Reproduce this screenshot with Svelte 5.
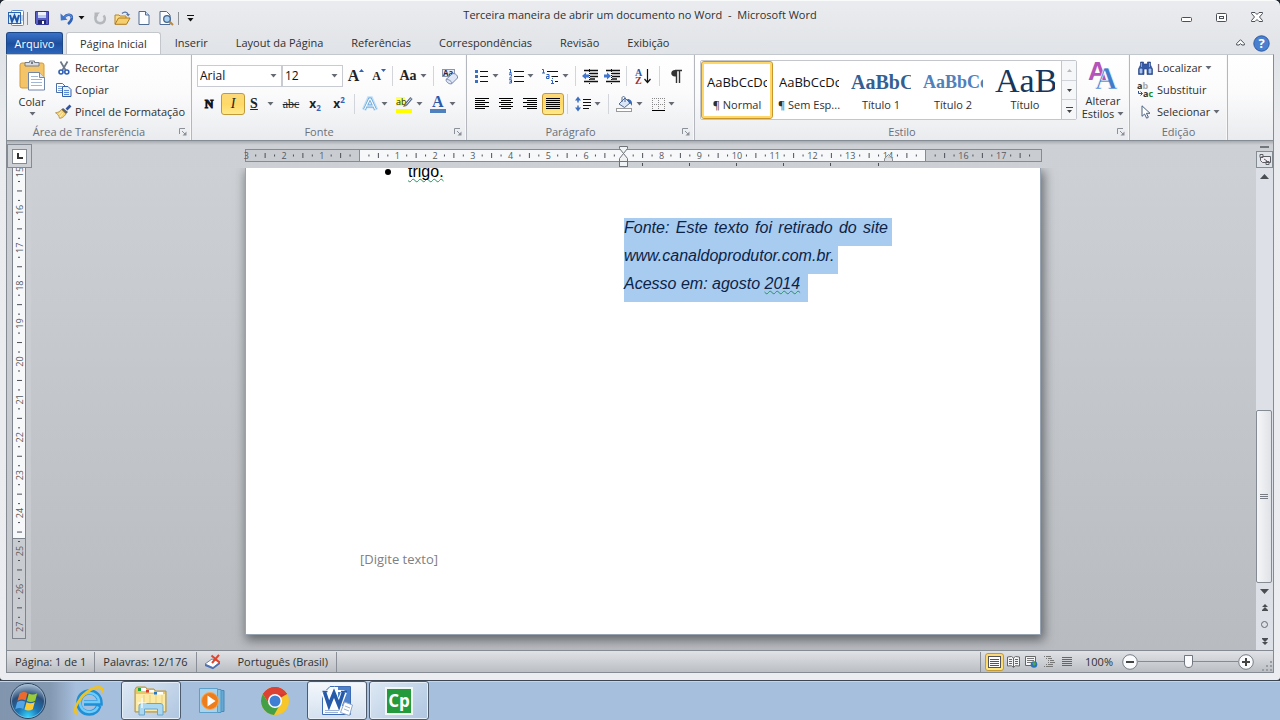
<script>
  const tabs = ['Inserir', 'Layout da Página', 'Referências', 'Correspondências', 'Revisão', 'Exibição'];
  const styles = [
    { sample: 'AaBbCcDc', name: '¶ Normal', kind: 'body' },
    { sample: 'AaBbCcDc', name: '¶ Sem Esp...', kind: 'body' },
    { sample: 'AaBbCc', name: 'Título 1', kind: 'h1' },
    { sample: 'AaBbCc', name: 'Título 2', kind: 'h2' },
    { sample: 'AaB', name: 'Título', kind: 'title' }
  ];
  const views = ['print', 'read', 'web', 'outline', 'draft'];

  const hStep = 37.75;
  const hZero = 114.5;
  const hNumbers = [];
  const hTicks = [];
  for (let q = -12; q <= 72; q++) {
    const x = hZero + (q * hStep) / 4;
    if (x > 792) break;
    if (q % 4 === 0) {
      if (q !== 0 && q !== 60 && q !== 28) hNumbers.push({ x, n: Math.abs(q / 4) });
    } else if (Math.abs(x - 680) > 4) hTicks.push({ x, half: q % 2 === 0 });
  }

  const vStep = 37.9;
  const vNumbers = [];
  const vTicks = [];
  for (let q = 60; q <= 108; q++) {
    const y = 4 + ((q - 60) * vStep) / 4;
    if (q % 4 === 0) vNumbers.push({ y, n: q / 4 });
    else vTicks.push({ y, half: q % 2 === 0 });
  }
  const tabStops = [397, 444, 491, 538, 585, 633];
  let zoom = $state(50);
</script>

{#snippet caret()}
  <svg class="caret" width="7" height="4" viewBox="0 0 7 4" aria-hidden="true"><path d="M.5 0h6L3.5 3.5z" fill="#666b73" /></svg>
{/snippet}

{#snippet launcher()}
  <button class="launcher" aria-label="Opções"><svg width="8" height="8" viewBox="0 0 8 8"><path d="M.5 6V.5H6M3 3l3 3" fill="none" stroke="#8c9199" /><path d="M7.500 3.500v4h-4z" fill="#8c9199" /></svg></button>
{/snippet}

{#snippet lines(ws, anchor)}
  <svg width="14" height="12" viewBox="0 0 14 12" aria-hidden="true">
    {#each ws as w, i}
      <rect x={anchor === 'end' ? 14 - w : anchor === 'mid' ? (14 - w) / 2 : 0} y={i * 2} width={w} height="1" fill="#000" />
    {/each}
  </svg>
{/snippet}

{#snippet icon(name)}
  {#if name === 'word'}
    <svg width="16" height="16" viewBox="0 0 16 16"><rect x="3.500" y=".5" width="12" height="15" rx="1" fill="#fff" stroke="#5f8cc7" /><path d="M13 6h2M13 8h2M13 10h2M5 13h9" stroke="#7aa0d4" /><rect x=".5" y="2.500" width="12" height="11" fill="#dceafa" stroke="#2a63ae" /><path d="M2 5l2 6.500L6.500 5.500 9 11.500 11 5" fill="none" stroke="#1f57a8" stroke-width="2" /></svg>
  {:else if name === 'save'}
    <svg width="14" height="14" viewBox="0 0 14 14"><path d="M.5.5h13v13h-12l-1-1z" fill="#5a5fc6" stroke="#33379c" /><rect x="3" y="1" width="8" height="6" fill="#eef3fc" /><path d="M3 4h8v3H3z" fill="#b9cdf0" /><rect x="3" y="9" width="8" height="4" fill="#23286f" /><rect x="7" y="10" width="2" height="3" fill="#fff" /></svg>
  {:else if name === 'undo'}
    <svg width="14" height="13" viewBox="0 0 14 13"><path d="M4 5.500C7 1.500 12 2 11.800 6c-.1 3-2 4.500-3.800 6" fill="none" stroke="#2f62b8" stroke-width="2.600" /><path d="M4 5.500C7 1.500 12 2 11.800 6" fill="none" stroke="#6f9de2" stroke-width="1" /><path d="M.5 1.500l.3 7 6.700-.8z" fill="#3f74cb" /></svg>
  {:else if name === 'redo'}
    <svg width="13" height="13" viewBox="0 0 13 13"><path d="M3.500 2.500C0 5 1 11.200 6 11.200S12 6 9.500 3.500" fill="none" stroke="#b4b7bb" stroke-width="2.400" /><path d="M6 .5h-5.500v5.500z" fill="#b4b7bb" /></svg>
  {:else if name === 'open'}
    <svg width="17" height="14" viewBox="0 0 17 14"><path d="M1 13V4h4l1 1h6v3" fill="#f8dd8c" stroke="#b98624" /><path d="M1 13.300L4.500 7H16l-3.500 6.300z" fill="#f5cf6d" stroke="#b07a1d" /><path d="M8 2.500C10 .5 13 .8 14 3" fill="none" stroke="#5775a5" stroke-width="1.300" /><path d="M12 3h4l-1.800 2.500z" fill="#5775a5" /></svg>
  {:else if name === 'new'}
    <svg width="12" height="14" viewBox="0 0 12 14"><path d="M1 .5h6.500L11 4v9.500H1z" fill="#fbfdff" stroke="#4f6a93" /><path d="M7.500.5V4H11" fill="#cfe0f5" stroke="#4f6a93" /></svg>
  {:else if name === 'preview'}
    <svg width="15" height="15" viewBox="0 0 15 15"><path d="M1 .5h6.500L11 4v9.500H1z" fill="#fbfdff" stroke="#4f6a93" /><circle cx="8" cy="8" r="3.300" fill="#a9d2f2" stroke="#46648c" stroke-width="1.300" /><path d="M10.500 10.500l3.500 3.500" stroke="#b88a3a" stroke-width="2" /></svg>
  {:else if name === 'paste'}
    <svg width="27" height="31" viewBox="0 0 27 31"><rect x="1" y="3" width="24" height="25" rx="2" fill="#f3c468" stroke="#d69a35" /><path d="M6 6V2.500h4.500V1h5v1.500H20V6z" fill="#d8dce2" stroke="#747d8a" /><circle cx="13" cy="3" r="1" fill="#555c68" /><path d="M9.500 12.500h11l5 5v12.500h-16z" fill="#fff" stroke="#6f86a8" /><path d="M20.500 12.500v5h5" fill="#dbe6f4" stroke="#6f86a8" /><path d="M12 16.500h7M12 19.500h11M12 22.500h11M12 25.500h11" stroke="#a3b6d3" /></svg>
  {:else if name === 'cut'}
    <svg width="12" height="14" viewBox="0 0 12 14"><path d="M2.500.5l5 8.500M9.500.5l-5 8.500" stroke="#6b7686" stroke-width="1.700" /><circle cx="3" cy="11" r="2" fill="none" stroke="#2f5fb5" stroke-width="1.600" /><circle cx="8.800" cy="11" r="2" fill="none" stroke="#2f5fb5" stroke-width="1.600" /></svg>
  {:else if name === 'copy'}
    <svg width="16" height="14" viewBox="0 0 16 14"><path d="M.5.500h6l2.500 2.500v6.500H.5z" fill="#fff" stroke="#4b6ea8" /><path d="M2 3.500h4M2 5.500h4M2 7.500h4" stroke="#7fa3dc" /><path d="M6.500 3.500h5.500l3 3v7H6.500z" fill="#eaf2fd" stroke="#3560a8" /><path d="M8 7.500h5M8 9.500h5M8 11.500h5" stroke="#5d8cd6" /></svg>
  {:else if name === 'brush'}
    <svg width="17" height="14" viewBox="0 0 17 14"><path d="M15.500.5l-4 4" stroke="#35549a" stroke-width="2.600" /><path d="M8 3l5 4-2 2-5-4z" fill="#5b6472" /><path d="M6.500 4.500l4.500 4.500C9 12 6.500 13.500 4.500 13.300 4 11 2.500 8.500.5 7.800 3 7.500 5 6.500 6.500 4.500z" fill="#f4d070" stroke="#a88132" stroke-width=".7" /><path d="M5 12l3-4M3.500 9.500l3-2.500" stroke="#fff3c4" /></svg>
  {:else if name === 'eraser'}
    <svg width="17" height="17" viewBox="0 0 17 17"><rect x=".5" y="1.500" width="12" height="7" fill="#e6edf8" stroke="#8c97ab" /><text x="1" y="8" font-size="8" font-weight="700" fill="#1d2b52" font-family="Open Sans">Aa</text><path d="M4 11.500l6-5.500c2.500-1.500 6 1 5.500 4l-5.500 5.500c-2 1.300-6-1-6-4z" fill="#dfe6f5" stroke="#7787ab" /><path d="M4 11.500c1-1 6 1.500 6 4" fill="none" stroke="#7787ab" /></svg>
  {:else if name === 'glow'}
    <svg width="16" height="16" viewBox="0 0 16 16"><path d="M2 14L7 2.500h2L14 14M4.500 10h7" fill="none" stroke="#bfe0f7" stroke-width="4.500" /><path d="M2.500 13.500L7.500 3h1L13.500 13.500M5 10h6.500" fill="none" stroke="#6aa5da" stroke-width="2.800" /><path d="M2.500 13.500L7.500 3h1L13.500 13.500M5 10h6.500" fill="none" stroke="#fff" stroke-width="1.200" /></svg>
  {:else if name === 'marker'}
    <svg width="17" height="17" viewBox="0 0 17 17"><rect x="0" y="1" width="9" height="9" fill="#ffff5a" /><text x="0" y="9" font-size="9" fill="#222" font-family="Open Sans">ab</text><path d="M15.500 2l-6 7" stroke="#5d6d86" stroke-width="3" /><path d="M15 2.500l-5 6" stroke="#dfe7f2" /><path d="M7 11l1.500-3 2 2z" fill="#8a6d2a" /><rect x="0" y="13" width="16" height="4" fill="#ffff00" /></svg>
  {:else if name === 'color'}
    <svg width="16" height="17" viewBox="0 0 16 17"><text x="2" y="11" font-size="16" font-weight="700" fill="#2c5aa8" font-family="Liberation Serif">A</text><rect x="0" y="13" width="16" height="4" fill="#4f81bd" /></svg>
  {:else if name === 'bullets'}
    <svg width="14" height="14" viewBox="0 0 14 14"><path d="M0 1h3v3H0zM0 6h3v3H0zM0 11h3v3H0z" fill="#3d6fc0" /><path d="M5 2.500h8M5 7.500h8M5 12.500h8" stroke="#111" /></svg>
  {:else if name === 'numbers'}
    <svg width="15" height="15" viewBox="0 0 15 15"><path d="M0 .5h1.500V4M0 4h3M0 5.700h2.500v1.500L.5 9H3M0 10.700h2.500V14H0M.7 12.300h2" fill="none" stroke="#2f62b8" /><path d="M5 2.500h10M5 7.500h10M5 12.500h10" stroke="#111" /></svg>
  {:else if name === 'multi'}
    <svg width="17" height="15" viewBox="0 0 17 15"><path d="M0 .5h1.500V4M0 4h3M4.500 5.500h2.500V9.500H4.500V7.500H7M9 11.500h1.500V14.500M9 14.500h3M10.500 9v1" fill="none" stroke="#2f62b8" /><path d="M5 2.500h11M9.500 7.500H16M13 12.500h3" stroke="#111" /></svg>
  {:else if name === 'outdent' || name === 'indent'}
    <svg width="17" height="15" viewBox="0 0 17 15"><path d="M2 1.500h14M8 4.500h8M8 7.500h8M8 10h5M2 12.500h14" stroke="#111" stroke-width="1.300" /><path d="M7.500 0v15" stroke="#111" stroke-dasharray="1 1" /><path d={name === 'outdent' ? 'M0 7l4-3.500v2h3v3H4v2z' : 'M7 7L3 3.500v2H0v3h3v2z'} fill="#3f76cf" /></svg>
  {:else if name === 'sort'}
    <svg width="16" height="17" viewBox="0 0 16 17"><g font-size="10" font-weight="700" font-family="Liberation Serif"><text x="0" y="8" fill="#2c5aa8">A</text><text x="0" y="16" fill="#9a2f35">Z</text></g><path d="M12.500 1v13M9.500 11l3 3.500 3-3.500" fill="none" stroke="#111" stroke-width="1.200" /></svg>
  {:else if name === 'pilcrow'}
    <svg width="11" height="13" viewBox="0 0 11 13"><path d="M6 0H4C-1 0-1 6.500 4 6.500h1z" fill="#333" /><path d="M4 .500h7M5.500 0v13M8.500 0v13" stroke="#333" stroke-width="1.400" fill="none" /></svg>
  {:else if name === 'spacing'}
    <svg width="16" height="16" viewBox="0 0 16 16"><path d="M3 2v12" stroke="#3d6fc0" stroke-width="1.500" stroke-dasharray="4.500 3" /><path d="M0 4.500L3 .500l3 4zM0 11.500L3 15.500l3-4z" fill="#3d6fc0" /><path d="M8 3.500h8M8 6.500h8M8 9.500h8M8 12.500h6" stroke="#111" /></svg>
  {:else if name === 'bucket'}
    <svg width="17" height="16" viewBox="0 0 17 16"><path d="M3 8l6-6 5 5-5.500 4.500z" fill="#dbe7f7" stroke="#50688f" /><path d="M6 6V2c0-2 3-2 3 0v4" fill="none" stroke="#50688f" /><path d="M11 3c4 0 5.500 2 5 7-1-2-2-3-3-3z" fill="#3568b5" /><rect x=".5" y="12.500" width="15" height="3" fill="#fff" stroke="#9a9a9a" /></svg>
  {:else if name === 'border'}
    <svg width="13" height="13" viewBox="0 0 13 13"><path d="M.5 0v12M6.500 0v12M12.500 0v12M0 .5h13M0 6.500h13" stroke="#888" stroke-dasharray="1 1" /><path d="M0 12.500h13" stroke="#000" /></svg>
  {:else if name === 'change'}
    <svg width="31" height="30" viewBox="0 0 31 30"><text x="0" y="19" font-size="26" font-weight="700" fill="#b453b8" font-family="Liberation Sans">A</text><text x="7" y="28" font-size="31" font-weight="700" fill="#3f7cca" stroke="#fff" stroke-width=".6" font-family="Liberation Serif">A</text></svg>
  {:else if name === 'find'}
    <svg width="15" height="14" viewBox="0 0 15 14"><path d="M2.500 1h3v2h4V1h3v3l2 4v5.500H9V8H6v5.500H.5V8l2-4z" fill="#3559a4" stroke="#1f3a78" stroke-width=".6" /><path d="M2 8h2v4H2zM11 8h2v4h-2zM3.500 2v4M11.500 2v4" fill="#a9c4ee" stroke="#a9c4ee" stroke-width=".7" /></svg>
  {:else if name === 'replace'}
    <svg width="17" height="16" viewBox="0 0 17 16"><g font-size="9" font-weight="700" font-family="Open Sans"><text x="0" y="7"><tspan fill="#333">a</tspan><tspan fill="#aaa">b</tspan></text><text x="6" y="15"><tspan fill="#333">a</tspan><tspan fill="#178a1c">c</tspan></text></g><path d="M1.500 9v2.500H5M3.500 9.500l2 2-2 2" fill="none" stroke="#2d4f94" /></svg>
  {:else if name === 'pointer'}
    <svg width="10" height="14" viewBox="0 0 10 14"><path d="M1 .8v10.500l2.600-2.300 2 4.200 1.800-.9-2-4H9z" fill="#fff" stroke="#4b6080" /></svg>
  {:else if name === 'proof'}
    <svg width="18" height="16" viewBox="0 0 18 16"><path d="M1 10l7-5 8 3-7 5.500z" fill="#fff" stroke="#7185a8" /><path d="M1 10l8 3.500v1.800L1 12zM9 13.500L16 8v2l-7 5.300z" fill="#4a6fb5" /><path d="M7.500 1.500l8 7M15 .8L8 9" stroke="#e0452b" stroke-width="2" /></svg>
  {:else if name === 'print'}
    <svg width="13" height="12" viewBox="0 0 13 12"><rect x=".5" y=".5" width="12" height="11" fill="#fff" stroke="#555" /><path d="M2 3.500h9M2 5.500h9M2 7.500h9M2 9.500h9" stroke="#555" /></svg>
  {:else if name === 'read'}
    <svg width="13" height="12" viewBox="0 0 13 12"><path d="M.5 1l4-.500 2 1.500 2-1.500 4 .500v9l-4-.300-2 1.800-2-1.800-4 .300z" fill="#f4f5f6" stroke="#666" /><path d="M6.500 2v9M2 3.500h3M2 5.500h3M2 7.500h3M8 3.500h3M8 5.500h3M8 7.500h3" stroke="#666" /></svg>
  {:else if name === 'web'}
    <svg width="13" height="12" viewBox="0 0 13 12"><path d="M.5.500h10v9H.5z" fill="#f4f5f6" stroke="#666" /><path d="M2 2.500h7M2 4.500h7M2 6.500h5" stroke="#777" /><circle cx="9" cy="8.500" r="3.300" fill="#2a72b8" /><path d="M7 7l3-1 1 2-2 2z" fill="#54a846" /></svg>
  {:else if name === 'outline'}
    <svg width="11" height="11" viewBox="0 0 11 11"><path d="M0 .5h1M2 .5h5M2 2.500h1M4 2.500h4M4 4.500h1M6 4.500h4M4 6.500h1M6 6.500h5M2 8.500h1M4 8.500h5M0 10.500h1M2 10.500h7" stroke="#777" /></svg>
  {:else if name === 'draft'}
    <svg width="10" height="9" viewBox="0 0 10 9"><path d="M0 .5h10M0 2.500h10M0 4.500h10M0 6.500h10M0 8.500h10" stroke="#666" /></svg>
  {:else if name === 'start'}
    <svg width="38" height="38" viewBox="0 0 38 38"><defs><radialGradient id="orb" cx=".5" cy=".95" r=".9"><stop offset="0" stop-color="#35d5ff" /><stop offset=".35" stop-color="#1c76b4" /><stop offset=".7" stop-color="#2a4d78" /><stop offset="1" stop-color="#9eb6cc" /></radialGradient></defs><circle cx="19" cy="19" r="17.500" fill="url(#orb)" stroke="#31435c" /><circle cx="19" cy="19" r="16.500" fill="none" stroke="#a6c3dc" stroke-opacity=".6" /><path d="M10.500 11.500c3-2 5.500-2 8-.5l-2 7.500c-2.500-1.500-5-1.300-8 .3z" fill="#ee6a2c" /><path d="M19.700 11.500c3 1.500 5.500 1.300 8.500-.3l-2 7.500c-3 1.700-5.700 1.500-8.300.3z" fill="#9acb3b" /><path d="M8.200 20c3-1.700 5.300-1.600 8-.3l-2 7.300c-2.600-1.300-5-1.200-8 .3z" fill="#53a5e8" /><path d="M17.500 20.300c3 1.400 5.500 1.200 8.300-.3l-2 7.300c-3 1.600-5.600 1.500-8.300.3z" fill="#fccb34" /></svg>
  {:else if name === 'ie'}
    <svg width="32" height="32" viewBox="0 0 32 32"><path d="M26 20.500C24 26 20 28 16.500 28 10 28 6 23.500 6 17.500S10.500 7 16.500 7 27 11.500 27 18H11" fill="none" stroke="#1f8fd8" stroke-width="5.500" /><path d="M25 21.500C23 26 20 27 16.500 27 11 27 7 23 7 17.500S11 8 16.500 8 26 12 26 17H11" fill="none" stroke="#6fcbf7" stroke-width="2.500" /><path d="M4 29c-6-4 4-19 14-24.500 6-3.300 12-3.500 11.500 3" fill="none" stroke="#f3c21c" stroke-width="2.600" /></svg>
  {:else if name === 'explorer'}
    <svg width="34" height="32" viewBox="0 0 34 32"><path d="M1 4.500l1.500-2.500h9L13 4h7l1.500 2H32v21H1z" fill="#e9c766" stroke="#b8933a" /><path d="M2 9h29v17H2z" fill="#fbe9a4" /><path d="M4 3h3v3H4z" fill="#1ba33a" /><path d="M7 3h5v3H7z" fill="#fff" /><path d="M12 5h3v2.500h-3z" fill="#d63c32" /><path d="M15 5h5v2.500h-5z" fill="#fff" /><path d="M20 7h3v2.500h-3z" fill="#2378cb" /><path d="M23 7h6v2.500h-6z" fill="#fff" /><path d="M10 10v9M16 10v9M22 10v9M28 10v15" stroke="#e8cf7d" /><path d="M5 30V21.500c0-2 1-3 3-3h18c2 0 3 1 3 3V30h-5.500v-6h-13v6z" fill="#a9d8f0" stroke="#6ca5c8" /><path d="M8 13v10M3.500 18h9" stroke="#fff" stroke-width="1.200" /></svg>
  {:else if name === 'media'}
    <svg width="30" height="28" viewBox="0 0 30 28"><path d="M14 3.500h12v21H14z" fill="#63a9d3" stroke="#478ab8" /><path d="M8 2.500h15v23H8z" fill="#84c0e2" stroke="#5395c0" /><path d="M1.500 1.500h18v24h-18z" fill="#a9d3ec" stroke="#5c9fc9" /><circle cx="12" cy="14" r="8.500" fill="#ee7d1c" stroke="#f9a650" /><path d="M9.500 8.500l8 5.500-8 5.500z" fill="#fff" /></svg>
  {:else if name === 'chrome'}
    <svg width="30" height="30" viewBox="0 0 30 30"><circle cx="15" cy="15" r="14" fill="#f6c62a" /><path d="M15 15L2.900 8A14 14 0 0 1 27.100 8z" fill="#d7392c" /><path d="M15 8h12.100A14 14 0 0 0 2.900 8L9 18z" fill="#dc4234" /><path d="M2.900 8A14 14 0 0 0 14 29l6-10.500L15 21l-6-3z" fill="#44a047" /><circle cx="15" cy="15" r="7" fill="#fff" /><circle cx="15" cy="15" r="5.500" fill="#3e7fd4" /></svg>
  {:else if name === 'wordbig'}
    <svg width="32" height="32" viewBox="0 0 32 32"><path d="M9 1.500h20.500v28H1.500V9z" fill="#f7faff" stroke="#3d6cb4" /><path d="M17 2h12v19H17z" fill="#4b82cb" /><path d="M3 7l4.500 14L13 9l4.500 12L23 7" fill="none" stroke="#fff" stroke-width="6" /><path d="M2.500 6h21" stroke="#fff" stroke-width="2" /><path d="M3.500 7l4.500 13.500L13 8l5 12.500L22.500 7" fill="none" stroke="#245aa9" stroke-width="3.600" /><path d="M1.500 6.500h5M20 6.500h6" stroke="#245aa9" stroke-width="1.500" /><path d="M23.500 17l8 3-3 10.500-9-3z" fill="#fff" stroke="#8fa9cf" /><path d="M24 21l5 2M23 24l5 2M4 25.500h14M4 27.500h13" stroke="#9cb3d5" /></svg>
  {/if}
{/snippet}

<div class="screen">
  <div class="window">
    <header class="titlebar">
      <div class="quick">
        <span class="q w20">{@render icon('word')}</span>
        <i class="bar"></i>
        <button class="q w26" aria-label="Salvar">{@render icon('save')}</button>
        <button class="q w34" aria-label="Desfazer">{@render icon('undo')}<svg width="7" height="4" viewBox="0 0 7 4"><path d="M.5 0h6L3.500 3.500z" fill="#111" /></svg></button>
        <button class="q w22" aria-label="Refazer">{@render icon('redo')}</button>
        <button class="q w22" aria-label="Abrir">{@render icon('open')}</button>
        <button class="q w22" aria-label="Novo">{@render icon('new')}</button>
        <button class="q w22" aria-label="Visualizar impressão">{@render icon('preview')}</button>
        <i class="bar"></i>
        <button class="q w20" aria-label="Personalizar"><svg width="7" height="7" viewBox="0 0 7 7"><path d="M0 .500h7" stroke="#111" /><path d="M.5 3h6L3.500 6.500z" fill="#111" /></svg></button>
      </div>
      <h1>Terceira maneira de abrir um documento no Word&nbsp; -&nbsp; Microsoft Word</h1>
      <div class="winbtns">
        <button aria-label="Minimizar"><svg width="11" height="12" viewBox="0 0 11 12"><rect x=".5" y="6.500" width="10" height="4" rx="1" fill="#fff" stroke="#4b5058" /></svg></button>
        <button aria-label="Restaurar"><svg width="11" height="9" viewBox="0 0 11 9"><rect x=".5" y=".5" width="10" height="8" rx="1" fill="#fff" stroke="#4b5058" /><rect x="3.500" y="3.500" width="4" height="2" fill="#fff" stroke="#4b5058" /></svg></button>
        <button aria-label="Fechar"><svg width="12" height="10" viewBox="0 0 12 10"><path d="M.5.5h3.500l2 2 2-2h3.500v1L8.500 5l3 3.500v1H8l-2-2-2 2H.5v-1l3-3.500-3-3.500z" fill="#fff" stroke="#4b5058" /></svg></button>
      </div>
    </header>

    <nav class="tabs">
      <button class="file">Arquivo</button>
      <button class="active">Página Inicial</button>
      {#each tabs as t}<button>{t}</button>{/each}
      <div class="tabend">
        <button aria-label="Minimizar faixa"><svg width="9" height="8" viewBox="0 0 9 8"><path d="M.7 4.500l3.800-3.800 3.800 3.800v1.500H6L4.500 4.700 3 6H.7z" fill="#fff" stroke="#4b5058" /></svg></button>
        <button aria-label="Ajuda"><svg width="17" height="17" viewBox="0 0 17 17"><circle cx="8.500" cy="8.500" r="7.700" fill="#4a80d0" stroke="#2d5aa5" /><text x="8.500" y="13" text-anchor="middle" font-size="13" font-weight="700" fill="#fff" font-family="Open Sans">?</text></svg></button>
      </div>
    </nav>

    <section class="ribbon">
      <div class="group clip">
        <div class="content">
          <button class="big paste">{@render icon('paste')}<span>Colar</span>{@render caret()}</button>
          <div class="stack">
            <button><span class="ic">{@render icon('cut')}</span>Recortar</button>
            <button><span class="ic">{@render icon('copy')}</span>Copiar</button>
            <button><span class="ic">{@render icon('brush')}</span>Pincel de Formatação</button>
          </div>
        </div>
        <footer><span>Área de Transferência</span>{@render launcher()}</footer>
      </div>

      <div class="group font">
        <div class="content rows">
          <div class="row">
            <label class="combo face"><select aria-label="Fonte"><option>Arial</option></select>{@render caret()}</label>
            <label class="combo size"><select aria-label="Tamanho"><option>12</option></select>{@render caret()}</label>
            <button class="t w26 serif" aria-label="Aumentar fonte"><b class="a16">A</b><svg class="up" width="5" height="3" viewBox="0 0 5 3"><path d="M0 3L2.500 0 5 3z" fill="#2f62b8" /></svg></button>
            <button class="t w20 serif" aria-label="Reduzir fonte"><b class="a12">A</b><svg class="up" width="5" height="3" viewBox="0 0 5 3"><path d="M0 0h5L2.500 3z" fill="#2f62b8" /></svg></button>
            <i class="sep"></i>
            <button class="t w34 serif" aria-label="Maiúsculas e minúsculas"><b class="a14">Aa</b>{@render caret()}</button>
            <i class="sep"></i>
            <button class="t w26" aria-label="Limpar formatação">{@render icon('eraser')}</button>
          </div>
          <div class="row">
            <button class="t w24 serif" aria-label="Negrito"><b class="a12 heavy">N</b></button>
            <button class="t w24 serif on" aria-label="Itálico"><em class="a14">I</em></button>
            <button class="t w34 serif" aria-label="Sublinhado"><b class="a14 under">S</b><span class="gap"></span>{@render caret()}</button>
            <button class="t w24 serif" aria-label="Tachado"><s class="a12">abc</s></button>
            <button class="t w24" aria-label="Subscrito"><b class="a12">x<sub>2</sub></b></button>
            <button class="t w24" aria-label="Sobrescrito"><b class="a12">x<sup>2</sup></b></button>
            <i class="sep"></i>
            <button class="t w34" aria-label="Efeitos de texto">{@render icon('glow')}{@render caret()}</button>
            <button class="t w34" aria-label="Realce">{@render icon('marker')}{@render caret()}</button>
            <button class="t w34" aria-label="Cor da fonte">{@render icon('color')}{@render caret()}</button>
          </div>
        </div>
        <footer><span>Fonte</span>{@render launcher()}</footer>
      </div>

      <div class="group para">
        <div class="content rows">
          <div class="row">
            <button class="t w34" aria-label="Marcadores">{@render icon('bullets')}{@render caret()}</button>
            <button class="t w34" aria-label="Numeração">{@render icon('numbers')}{@render caret()}</button>
            <button class="t w34" aria-label="Vários níveis">{@render icon('multi')}{@render caret()}</button>
            <i class="sep"></i>
            <button class="t w22" aria-label="Diminuir recuo">{@render icon('outdent')}</button>
            <button class="t w22" aria-label="Aumentar recuo">{@render icon('indent')}</button>
            <i class="sep"></i>
            <button class="t w26" aria-label="Classificar">{@render icon('sort')}</button>
            <i class="sep"></i>
            <button class="t w26" aria-label="Mostrar tudo">{@render icon('pilcrow')}</button>
          </div>
          <div class="row">
            <button class="t w24" aria-label="Esquerda">{@render lines([14, 10, 14, 10, 14, 10], 'start')}</button>
            <button class="t w24" aria-label="Centro">{@render lines([14, 10, 14, 10, 14, 10], 'mid')}</button>
            <button class="t w24" aria-label="Direita">{@render lines([14, 10, 14, 10, 14, 10], 'end')}</button>
            <button class="t w22 on" aria-label="Justificar">{@render lines([14, 14, 14, 14, 14, 14], 'start')}</button>
            <i class="sep"></i>
            <button class="t w34" aria-label="Espaçamento">{@render icon('spacing')}{@render caret()}</button>
            <i class="sep"></i>
            <button class="t w34" aria-label="Sombreamento">{@render icon('bucket')}{@render caret()}</button>
            <button class="t w34" aria-label="Bordas">{@render icon('border')}{@render caret()}</button>
          </div>
        </div>
        <footer><span>Parágrafo</span>{@render launcher()}</footer>
      </div>

      <div class="group styles">
        <div class="content">
          <div class="gallery">
            {#each styles as s, i}
              <button class="style" class:chosen={i === 0}><span class="sample {s.kind}">{s.sample}</span><span class="name">{s.name}</span></button>
            {/each}
            <div class="spin">
              <button aria-label="Acima"><svg width="5" height="3" viewBox="0 0 5 3"><path d="M0 3L2.500 0 5 3z" fill="#b5b8bd" /></svg></button>
              <button aria-label="Abaixo"><svg width="5" height="3" viewBox="0 0 5 3"><path d="M0 0h5L2.500 3z" fill="#444" /></svg></button>
              <button aria-label="Mais"><svg width="7" height="6" viewBox="0 0 7 6"><path d="M0 .500h7" stroke="#444" /><path d="M1 3h5L3.500 6z" fill="#444" /></svg></button>
            </div>
          </div>
          <button class="big change">{@render icon('change')}<span>Alterar</span><span class="two">Estilos {@render caret()}</span></button>
        </div>
        <footer><span>Estilo</span>{@render launcher()}</footer>
      </div>

      <div class="group edit">
        <div class="content">
          <div class="stack">
            <button><span class="ic">{@render icon('find')}</span>Localizar {@render caret()}</button>
            <button><span class="ic">{@render icon('replace')}</span>Substituir</button>
            <button><span class="ic">{@render icon('pointer')}</span>Selecionar {@render caret()}</button>
          </div>
        </div>
        <footer><span>Edição</span></footer>
      </div>
    </section>

    <main class="doc">
      <button class="corner" aria-label="Tabulação"><span><svg width="6" height="6" viewBox="0 0 6 6"><path d="M1 0v5h5" fill="none" stroke="#333" stroke-width="2" /></svg></span></button>
      <div class="hruler">
        <svg width="797" height="22" viewBox="0 0 797 22" role="img" aria-label="Régua horizontal">
          <rect x=".5" y="4.500" width="796" height="12" fill="#c9cdd2" stroke="#858b93" />
          <rect x="115" y="5" width="565" height="11" fill="#f7f8f9" />
          <path d="M114.500 5v11M680.500 5v11" stroke="#858b93" />
          {#each hTicks as t}<rect x={t.x - 0.500} y={t.half ? 8 : 9.500} width="1" height={t.half ? 5 : 2} fill="#4c4f57" />{/each}
          {#each hNumbers as t}<text x={t.x} y="14" text-anchor="middle">{t.n}</text>{/each}
          {#each tabStops as x}<rect {x} y="18" width="1" height="3" fill="#4c4f57" />{/each}
          <path d="M374.500 1.500h8v2l-4 5-4-5zM374.500 16.500v-3l4-5 4 5v3z" fill="#f1f2f3" stroke="#6e737a" />
          <rect x="374.500" y="16.500" width="8" height="5" fill="#f1f2f3" stroke="#6e737a" />
          <path d="M639.500 16.500v-3l4-4 4 4v3z" fill="#d9dbde" fill-opacity=".7" stroke="#8b9097" />
        </svg>
      </div>
      <div class="sbtop">
        <i></i>
        <button aria-label="Régua"><svg width="12" height="11" viewBox="0 0 12 11"><path d="M1 .5h3v3H1zM3.500 2.500h8v6h-8l-2-2v-3zM7 7.500h3v3H7z" fill="#f3edf2" stroke="#5d5f66" /><path d="M5 5l3 2" stroke="#5d5f66" /></svg></button>
      </div>
      <div class="vruler">
        <svg width="14" height="471" viewBox="0 0 14 471" role="img" aria-label="Régua vertical">
          <rect x=".5" y="-2" width="13" height="472.500" fill="#c9cdd2" stroke="#7e848c" />
          <rect x="1" y="0" width="12" height="370" fill="#f7f8f9" />
          <path d="M1 370.500h12" stroke="#7e848c" />
          {#each vTicks as t}<rect x={t.half ? 5 : 6} y={t.y - 0.500} width={t.half ? 5 : 2} height="1" fill="#4c4f57" />{/each}
          {#each vNumbers as t}<text transform="translate(11 {t.y}) rotate(-90)" text-anchor="middle">{t.n}</text>{/each}
        </svg>
      </div>
      <div class="canvas">
        <article class="page">
          <ul><li><i class="dot"></i><span class="grammar">trigo.</span></li></ul>
          <div class="quote">
            <p class="full">Fonte: Este texto foi retirado do site</p>
            <p>www.canaldoprodutor.com.br.</p>
            <p class="last">Acesso em: agosto <span class="grammar">2014</span></p>
          </div>
          <p class="foot">[Digite texto]</p>
        </article>
      </div>
      <div class="scroll">
        <button class="arrow" aria-label="Rolar para cima"><svg width="9" height="5" viewBox="0 0 9 5"><path d="M0 5l4.500-5L9 5z" fill="#4a4d52" /></svg></button>
        <div class="track"><div class="thumb"><i></i><i></i><i></i></div></div>
        <button class="arrow" aria-label="Rolar para baixo"><svg width="9" height="5" viewBox="0 0 9 5"><path d="M0 0h9L4.500 5z" fill="#4a4d52" /></svg></button>
        <button class="nav" aria-label="Página anterior"><svg width="6" height="7" viewBox="0 0 6 7"><path d="M0 3l3-3 3 3zM0 6l3-3 3 3zM0 6h6v1H0z" fill="#4a4d52" /></svg></button>
        <button class="nav" aria-label="Procurar"><svg width="7" height="7" viewBox="0 0 7 7"><circle cx="3.500" cy="3.500" r="3" fill="none" stroke="#666a70" /></svg></button>
        <button class="nav" aria-label="Próxima página"><svg width="6" height="7" viewBox="0 0 6 7"><path d="M0 0h6v1H0zM0 1h6L3 4zM0 4h6L3 7z" fill="#4a4d52" /></svg></button>
      </div>
    </main>

    <footer class="status">
      <span class="cell">Página: 1 de 1</span>
      <span class="cell">Palavras: 12/176</span>
      <span class="cell lang">{@render icon('proof')}<span>Português (Brasil)</span></span>
      <div class="right">
        {#each views as v, i}<button class="view" class:on={i === 0} aria-label={v}>{@render icon(v)}</button>{/each}
        <span class="pct">100%</span>
        <button class="round" aria-label="Reduzir"><svg width="16" height="16" viewBox="0 0 16 16"><circle cx="8" cy="8" r="7.300" fill="#fafbfc" stroke="#777d86" /><path d="M4 8h8" stroke="#444" stroke-width="2" /></svg></button>
        <input type="range" min="0" max="100" bind:value={zoom} aria-label="Zoom" />
        <button class="round" aria-label="Ampliar"><svg width="16" height="16" viewBox="0 0 16 16"><circle cx="8" cy="8" r="7.300" fill="#fafbfc" stroke="#777d86" /><path d="M4 8h8M8 4v8" stroke="#444" stroke-width="2" /></svg></button>
        <svg class="grip" width="11" height="11" viewBox="0 0 11 11"><path d="M8 0h2v2H8zM4 4h2v2H4zM8 4h2v2H8zM0 8h2v2H0zM4 8h2v2H4zM8 8h2v2H8z" fill="#989da4" /></svg>
      </div>
    </footer>
  </div>

  <nav class="taskbar">
    <button class="start" aria-label="Iniciar">{@render icon('start')}</button>
    <button aria-label="Internet Explorer">{@render icon('ie')}</button>
    <button class="open" aria-label="Explorador">{@render icon('explorer')}</button>
    <button aria-label="Media Player">{@render icon('media')}</button>
    <button aria-label="Chrome">{@render icon('chrome')}</button>
    <button class="open bright" aria-label="Word">{@render icon('wordbig')}</button>
    <button class="open" aria-label="Captivate"><span class="cp">Cp</span></button>
  </nav>
</div>

<style>
  :global(body) { margin: 0; background: #20262e; }
  .screen { min-height: 100vh; display: flex; flex-direction: column; font: 11px/16px "Open Sans", "Noto Sans", sans-serif; color: #303030; }
  .screen :global(*) { box-sizing: border-box; }
  button { font: inherit; color: inherit; background: none; border: 0; padding: 0; margin: 0; display: flex; align-items: center; justify-content: center; white-space: nowrap; }
  svg { display: block; flex: none; overflow: visible; }
  p, h1, ul { margin: 0; padding: 0; font-weight: 400; }
  .window { flex: 1; display: flex; flex-direction: column; padding: 0 6px 7px; border-radius: 6px 6px 3px 3px; background: linear-gradient(#ebecef, #e0e3e7 54px, #e9ebee 120px, #ebedf0); box-shadow: inset 0 1px #f9fafa; }

  .titlebar { height: 32px; display: grid; grid-template-columns: 1fr auto 1fr; align-items: center; }
  .titlebar h1 { font-size: 11px; padding-bottom: 2px; }
  .quick { display: flex; align-items: center; padding-top: 4px; }
  .q { display: flex; align-items: center; justify-content: center; gap: 4px; height: 22px; }
  .bar { width: 1px; height: 13px; background: #8b9097; margin: 0 1px; }
  .w20 { width: 20px; } .w22 { width: 22px; } .w24 { width: 24px; } .w26 { width: 26px; } .w34 { width: 34px; }
  .winbtns { display: flex; justify-content: flex-end; padding-top: 2px; }
  .winbtns button { width: 35px; height: 22px; }

  .tabs { height: 22px; display: flex; }
  .tabs > button { padding: 0 14px; }
  .tabs .file { width: 57px; padding: 0; color: #fff; background: linear-gradient(#3b73c8, #1e4f9f 50%, #2c66bb); border: 1px solid #1b4688; border-bottom: 0; border-radius: 3px 3px 0 0; margin-right: 3px; }
  .tabs .active { background: #fff; border: 1px solid #c3c7cc; border-bottom: 0; border-radius: 3px 3px 0 0; padding: 0 13px; }
  .tabend { margin-left: auto; display: flex; gap: 8px; padding-right: 4px; }

  .ribbon { display: flex; height: 87px; border: 1px solid #868c94; border-top-color: #c3c8ce; background: linear-gradient(#fff, #fbfbfc 45%, #e9ebee); }
  .group { display: flex; flex-direction: column; border-right: 1px solid #b4b8be; box-shadow: inset -1px 0 #f8f8f9; }
  .content { height: 69px; display: flex; }
  .group > footer { position: relative; height: 16px; display: flex; justify-content: center; padding-right: 20px; color: #6a7079; }
  .group.edit > footer { padding-right: 0; }
  .launcher { position: absolute; right: 4px; bottom: 4px; }
  .clip { width: 185px; } .font { width: 275px; } .para { width: 228px; } .styles { width: 435px; } .edit { width: 98px; }
  .big { flex-direction: column; justify-content: flex-start; line-height: 13px; }
  .paste { width: 48px; padding: 5px 0 0 2px; gap: 4px; }
  .change { width: 52px; padding-top: 6px; }
  .change span { padding-top: 3px; }
  .change .two { display: flex; align-items: center; gap: 3px; padding: 0; }
  .stack { display: flex; flex-direction: column; padding-top: 2px; }
  .stack button { height: 22px; justify-content: flex-start; gap: 3px; }
  .ic { width: 17px; display: flex; justify-content: center; }
  .edit .stack { padding-left: 7px; }
  .rows { flex-direction: column; padding: 10px 0 0 5px; gap: 6px; }
  .para .rows { padding-left: 3px; }
  .row { display: flex; align-items: center; height: 22px; }
  .combo { display: grid; height: 22px; align-items: center; border: 1px solid #c8ccd2; background: #fff; }
  .combo select { grid-area: 1 / 1; appearance: none; border: 0; background: none; font: inherit; font-size: 12px; color: #111; padding: 0 2px; outline: 0; }
  .combo :global(.caret) { grid-area: 1 / 1; justify-self: end; margin-right: 4px; }
  .face { width: 85px; } .size { width: 61px; }
  .t { height: 22px; gap: 3px; color: #222; }
  .gap { width: 3px; }
  .serif { font-family: "Liberation Serif", serif; }
  .a16 { font-size: 16px; } .a14 { font-size: 14px; } .a12 { font-size: 12px; }
  .heavy { -webkit-text-stroke: 1px #111; }
  .under { text-decoration: underline; }
  .up { align-self: flex-start; margin-top: 4px; margin-left: -3px; }
  sub, sup { font-size: 8px; line-height: 1; color: #2f62b8; }
  .sep { width: 1px; height: 20px; margin: 0 3px; background: #d2d5da; }
  .on { background: linear-gradient(#fcd97b, #ffd966 50%, #ffe98a); border: 1px solid #c29a37; border-radius: 3px; }

  .styles .content { padding: 5px 0 0 5px; }
  .styles .big { height: 64px; padding-top: 1px; }
  .gallery { display: flex; height: 60px; background: #fff; border: 1px solid #c3c7cd; border-radius: 2px; }
  .style { width: 72px; flex-direction: column; justify-content: flex-end; padding-bottom: 6px; border: 0 solid; }
  .style .name { line-height: 16px; }
  .chosen { border: 1px solid #c8962c; border-radius: 3px; box-shadow: inset 0 0 0 2px #ffd766; padding-bottom: 5px; }
  .sample { width: 60px; height: 34px; overflow: hidden; text-align: left; line-height: 38px; color: #111; }
  .body { font-size: 13px; }
  .h1 { font: 700 20px/38px "Liberation Serif", serif; color: #365f91; }
  .h2 { font: 700 18px/38px "Liberation Serif", serif; color: #4f81bd; }
  .title { height: 28px; font: 34px/24px "Liberation Serif", serif; color: #17365d; }
  .spin { display: flex; flex-direction: column; width: 15px; border-left: 1px solid #c3c7cd; }
  .spin button { flex: 1; border-bottom: 1px solid #d0d3d8; background: #f6f7f8; }
  .spin button:last-child { border-bottom: 0; }

  .doc { flex: 1; display: grid; grid-template-columns: 24px 1fr 17px; grid-template-rows: 27px 1fr; border: solid #858b93; border-width: 0 1px; background: linear-gradient(#a7abb0, #cdd1d5 4px, #cbcfd3 30%, #c4c8cc); }
  .corner { width: 25px; height: 24px; align-self: end; border: 1px solid #858b93; }
  .corner span { width: 15px; height: 15px; display: flex; align-items: center; justify-content: center; background: #fff; border: 1px solid #858b93; }
  .hruler { display: flex; justify-content: center; align-items: flex-end; padding-bottom: 1px; }
  .hruler text, .vruler text { font-size: 9px; fill: #55585f; font-family: "Open Sans", sans-serif; }
  .sbtop { display: flex; flex-direction: column; align-items: center; justify-content: flex-end; gap: 3px; }
  .sbtop i { width: 9px; height: 2px; background: #72777e; }
  .sbtop button { width: 17px; height: 17px; border: 1px solid #858b93; background: #dfe2e6; }
  .vruler { padding-left: 5px; }
  .vruler svg { overflow: hidden; }
  .canvas { display: flex; justify-content: center; align-items: flex-start; overflow: hidden; padding-right: 1px; background: linear-gradient(#cdd0d4, #b8bbbf); }
  .page { width: 796px; height: 467px; display: flex; flex-direction: column; align-items: flex-start; background: #fff; border: 1px solid #98a3b2; border-top: 0; box-shadow: 2px 4px 10px 1px rgba(50, 55, 60, 0.65); font: 16px/20px "Liberation Sans", Arial, sans-serif; color: #000; }
  .page ul { padding-left: 139px; height: 50px; }
  .page li { display: flex; align-items: center; height: 8px; gap: 17px; }
  .dot { width: 6px; height: 6px; border-radius: 50%; background: #000; }
  .grammar { text-decoration: underline wavy #28905f 1px; text-underline-offset: 1px; text-decoration-skip-ink: none; }
  .quote { padding-left: 378px; font-style: italic; color: #0b2347; display: flex; flex-direction: column; align-items: flex-start; }
  .quote p { background: #a8cbf0; padding: 0 4px 8px 0; white-space: nowrap; }
  .quote .last { padding-right: 8px; }
  .quote .full { width: 268px; text-align-last: justify; white-space: normal; }
  .foot { margin: auto 0 65px 114px; font: 13px/20px "Open Sans", sans-serif; color: #808080; }
  .scroll { display: flex; flex-direction: column; background: #dde1e7; }
  .arrow { height: 16px; }
  .track { flex: 1; display: flex; flex-direction: column; justify-content: flex-end; }
  .thumb { height: 173px; border: 1px solid #858b93; border-radius: 2px; background: linear-gradient(90deg, #f5f6f8, #dfe2e7); margin: 0 1px 0 0; display: flex; flex-direction: column; align-items: center; justify-content: center; gap: 1px; }
  .thumb i { width: 8px; height: 1px; background: #777c84; }
  .nav { height: 17px; }

  .status { height: 23px; display: flex; align-items: center; border: 1px solid #858b93; background: linear-gradient(#e0e2e6, #cdd0d4 50%, #bbbfc4); }
  .cell { height: 20px; line-height: 20px; padding: 0 8px; border-right: 1px solid #8a8f97; }
  .cell.lang { display: flex; align-items: center; gap: 16px; padding-left: 7px; }
  .right { margin-left: auto; height: 20px; display: flex; align-items: center; padding-left: 4px; border-left: 1px solid #8a8f97; }
  .view { width: 18px; height: 18px; }
  .view.on { width: 19px; }
  .pct { width: 46px; text-align: center; }
  .right input { appearance: none; width: 100px; height: 16px; margin: 0; background: linear-gradient(#858b94, #858b94) center / 100% 1px no-repeat; }
  .right input::-webkit-slider-thumb { appearance: none; width: 9px; height: 13px; background: #fafbfc; border: 1px solid #71767e; border-radius: 1px 1px 5px 5px; }
  .grip { align-self: flex-end; margin-left: 8px; }

  .taskbar { height: 40px; display: flex; gap: 2px; border-top: 1px solid #3c4653; background: linear-gradient(90deg, #8196ae, #8398b1 50px, #a6bfdc 76px, #a6bfdc); box-shadow: inset 0 1px #c4d5e8; }
  .taskbar button { width: 60px; }
  .taskbar .start { width: 57px; padding-right: 2px; }
  .taskbar .open { border: 1px solid #4d5b6d; border-radius: 3px; background: linear-gradient(135deg, #dde8f4, #afc6e0); box-shadow: inset 0 0 0 1px #e6eef7; }
  .taskbar .bright { background: linear-gradient(#f5f8fc, #d3e0ef); }
  .cp { width: 28px; height: 28px; border: 2px solid #f3f7f3; background: #239a3b; color: #fff; font: 700 17px/23px "Open Sans", sans-serif; }
</style>
